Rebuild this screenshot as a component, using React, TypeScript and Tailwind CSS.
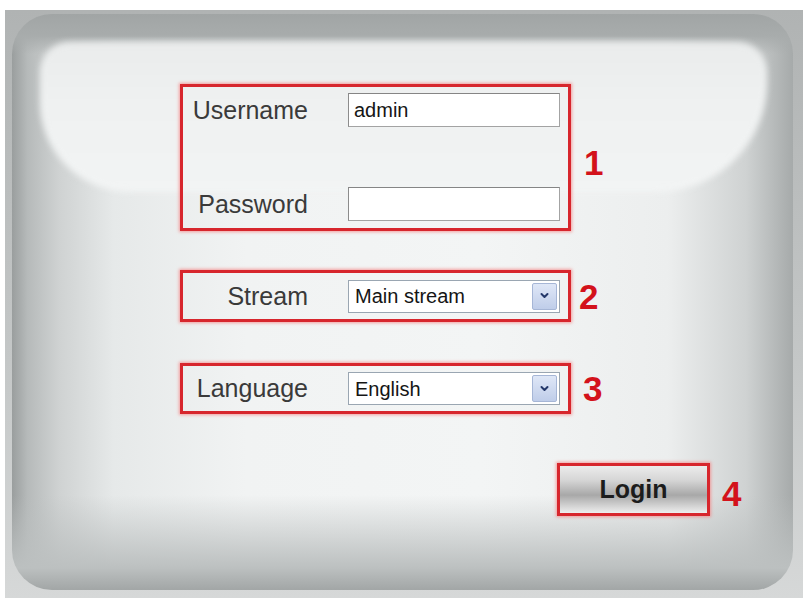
import React from "react";

function Chevron() {
  return (
    <svg width="11" height="8" viewBox="0 0 11 8" fill="none">
      <path d="M2.5 2 L5.5 5 L8.5 2" stroke="#24386a" strokeWidth="2" strokeLinecap="round" strokeLinejoin="round" />
    </svg>
  );
}

function TextBox({ value }: { value?: string }) {
  return (
    <input
      readOnly
      value={value ?? ""}
      className="h-[34px] w-[212px] bg-white border border-[#a3a3a3] border-t-[#858585] border-l-[#8c8c8c] pl-[5px] text-[20px] text-[#151515] outline-none"
    />
  );
}

function Select({ value }: { value: string }) {
  return (
    <div className="h-[33px] w-[212px] bg-white border border-[#9aa6b2] flex items-center justify-between pl-[6px] pr-[2px]">
      <span className="text-[20px] leading-none text-[#151515]">{value}</span>
      <span className="h-[27px] w-[25px] rounded-[2px] border border-[#a6b6d6] bg-[linear-gradient(to_bottom,#dfe7f7,#bfcde9)] flex items-center justify-center">
        <Chevron />
      </span>
    </div>
  );
}

function Num({ n, className = "" }: { n: string; className?: string }) {
  return <span className={`text-[35px] leading-none font-bold text-[#d3121b] ${className}`}>{n}</span>;
}

const redBox = "border-[3px] border-[#d7262d] shadow-[0_0_3px_1px_rgba(245,130,130,0.75)]";
const label = "w-[125px] text-right text-[25px] leading-none text-[#3a3a3a]";

export default function App() {
  return (
    <div className="w-[803px] h-[598px] bg-white overflow-hidden pl-[5px] pt-[10px] font-['Liberation_Sans',Arial,sans-serif]">
      <div className="w-[798px] h-[588px] bg-[linear-gradient(to_bottom,#b0b3b3,#c4c7c7_60%,#d6d8d8)] pt-[4px] pl-[7px] pr-[10px] pb-[8px] flex">
        <div className="flex-1 rounded-[40px] pt-[28px] pl-[28px] pr-[26px] bg-[linear-gradient(to_bottom,#a1a5a5_0px,#a8acac_22px,rgba(200,204,204,0)_40px),linear-gradient(to_top,#a2a6a6_0px,#bcc0c0_22px,rgba(225,228,228,0)_95px),linear-gradient(to_right,#9a9e9e_0%,#b6baba_2%,#cfd2d2_6%,#e6e9e9_13%,#f1f3f3_30%,#f3f5f5_60%,#eceeee_84%,#cfd2d2_94%,#a6aaaa_100%)]">
          <div className="grid">
            {/* glossy highlight behind the form */}
            <div className="col-start-1 row-start-1 self-start h-[150px] blur-[3px] rounded-tl-[30px] rounded-tr-[30px] rounded-bl-[90px] rounded-br-[110px] bg-[linear-gradient(to_bottom,#eaecec_0%,#eff1f1_40%,#f2f4f4_100%)]" />

            <div className="relative z-[1] col-start-1 row-start-1 pt-[42px] pl-[140px] flex flex-col">
              <div className="flex items-center gap-[13px]">
                <div className={`${redBox} w-[391px] flex flex-col gap-[60px] pt-[6px] pb-[7px] pr-[8px]`}>
                  <div className="flex items-center gap-[40px]">
                    <span className={label}>Username</span>
                    <TextBox value="admin" />
                  </div>
                  <div className="flex items-center gap-[40px]">
                    <span className={label}>Password</span>
                    <TextBox />
                  </div>
                </div>
                <Num n="1" className="mt-[10px]" />
              </div>

              <div className="flex items-center gap-[8px] mt-[39px]">
                <div className={`${redBox} w-[391px] h-[52px] flex items-center gap-[40px] pr-[8px]`}>
                  <span className={label}>Stream</span>
                  <Select value="Main stream" />
                </div>
                <Num n="2" />
              </div>

              <div className="flex items-center gap-[12px] mt-[41px]">
                <div className={`${redBox} w-[391px] h-[51px] flex items-center gap-[40px] pr-[8px]`}>
                  <span className={label}>Language</span>
                  <Select value="English" />
                </div>
                <Num n="3" />
              </div>

              <div className="flex items-center gap-[12px] mt-[49px] ml-[377px]">
                <button className={`${redBox} w-[153px] h-[53px] flex items-center justify-center bg-[linear-gradient(to_bottom,#ececec_0%,#d6d6d6_30%,#a8a8a8_62%,#cdcdcd_82%,#eeeeee_100%)]`}>
                  <span className="text-[25px] leading-none font-bold text-[#1c1c1c]">Login</span>
                </button>
                <Num n="4" className="mt-[8px]" />
              </div>
            </div>
          </div>
        </div>
      </div>
    </div>
  );
}
